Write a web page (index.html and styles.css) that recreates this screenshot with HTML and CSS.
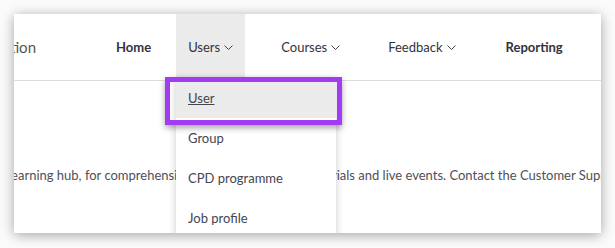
FILE: index.html
```html
<!DOCTYPE html>
<html lang="en">
<head>
  <meta charset="UTF-8" />
  <title>Users menu</title>
  <link rel="stylesheet" href="styles.css">
</head>
<body>

  <div class="frame">
    <header class="topbar">
      <div class="brand"><span>Learning Administration</span></div>
      <nav class="nav">
        <a class="nav-item bold">Home</a>
        <a class="nav-item open">Users <svg class="chev" viewBox="0 0 9 5"><polyline points="0.5,0.5 4.5,4.5 8.5,0.5" /></svg></a>
        <a class="nav-item">Courses <svg class="chev" viewBox="0 0 9 5"><polyline points="0.5,0.5 4.5,4.5 8.5,0.5" /></svg></a>
        <a class="nav-item">Feedback <svg class="chev" viewBox="0 0 9 5"><polyline points="0.5,0.5 4.5,4.5 8.5,0.5" /></svg></a>
        <a class="nav-item bold last">Reporting</a>
      </nav>
    </header>

    <div class="content">
      <p class="intro">learning hub, for comprehensive resources, manuals, tutorials and live events. Contact the Customer Support team for help.</p>
    </div>

    <ul class="dropdown">
      <li class="current"><a>User</a></li>
      <li><a>Group</a></li>
      <li><a>CPD programme</a></li>
      <li><a>Job profile</a></li>
    </ul>

    <div class="callout"></div>
  </div>

</body>
</html>
```

FILE: styles.css
```css
body {
  margin: 0;
  background-color: #fbfbfb;
  font-family: Lato, "Open Sans", sans-serif;
  color: #3b3b45;
}
.frame {
  position: relative;
  margin: 14px;
  width: 587px;
  height: 219px;
  background-color: #fff;
  overflow: hidden;
  box-shadow: 0 2px 12px rgba(0, 0, 0, 0.35);
}
.topbar {
  display: flex;
  align-items: center;
  height: 66px;
  border-bottom: 1px solid #dcdcdc;
}
.brand {
  display: flex;
  justify-content: flex-end;
  width: 22px;
  font-size: 15px;
  color: #555;
  white-space: nowrap;
}
.nav {
  display: flex;
  align-items: stretch;
  height: 100%;
  margin-left: 68px;
  gap: 24px;
}
.nav-item {
  display: flex;
  align-items: center;
  gap: 4px;
  padding: 0 12px;
  font-size: 13px;
  color: #33333d;
}
.nav-item.bold {
  font-weight: bold;
  margin-right: -11px;
}
.nav-item.last {
  margin-left: 2px;
}
.nav-item.open {
  background-color: #ebebeb;
}
.chev {
  width: 9px;
  height: 5px;
  margin-top: 1px;
  fill: none;
  stroke: #444;
  stroke-width: 1;
}
.content {
  padding-top: 86px;
}
.intro {
  margin: 0 0 0 -6px;
  font-size: 13px;
  color: #4f4f58;
  white-space: nowrap;
}
.dropdown {
  position: absolute;
  left: 162px;
  top: 64px;
  width: 160px;
  margin: 0;
  padding: 0;
  list-style: none;
  background-color: #fff;
  box-shadow: 0 2px 8px rgba(0, 0, 0, 0.2);
}
.dropdown li {
  height: 40px;
  display: flex;
  align-items: center;
  padding-left: 12px;
  font-size: 13px;
  color: #45454f;
}
.dropdown li.current {
  background-color: #ebebeb;
}
.dropdown li.current a {
  text-decoration: underline;
}
.callout {
  position: absolute;
  left: 151px;
  top: 63px;
  width: 167px;
  height: 38px;
  border: 5px solid #a13cf2;
  box-shadow: 0 3px 6px rgba(0, 0, 0, 0.35);
}
```
